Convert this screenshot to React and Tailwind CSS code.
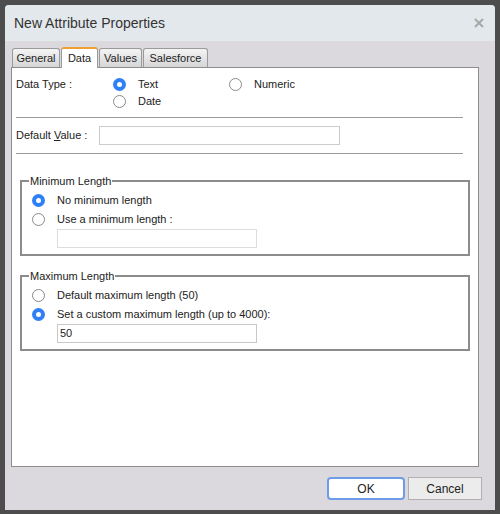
import React from "react";

function Radio({ checked }) {
  return checked ? (
    <span className="flex h-[13px] w-[13px] shrink-0 items-center justify-center rounded-full bg-[#2f7ff6]">
      <span className="h-[5px] w-[5px] rounded-full bg-white" />
    </span>
  ) : (
    <span className="h-[13px] w-[13px] shrink-0 rounded-full border border-[#8a8a8a] bg-white" />
  );
}

function RadioRow({ checked, label, h = "h-[19px]" }) {
  return (
    <div className={"flex items-center " + h}>
      <Radio checked={checked} />
      <span className="ml-[12px]">{label}</span>
    </div>
  );
}

function Tab({ label, active, w }) {
  return active ? (
    <div
      className={"relative z-10 -mb-px flex h-[21px] items-center justify-center rounded-t-[3px] border-x border-t-2 border-x-[#999] border-t-[#f0a030] bg-white " + w}
    >
      {label}
    </div>
  ) : (
    <div
      className={"mt-[2px] flex h-[19px] items-center justify-center rounded-t-[3px] border border-b-0 border-[#9a9a9a] bg-gradient-to-b from-[#f4f4f4] to-[#d6d6d8] " + w}
    >
      {label}
    </div>
  );
}

function Group({ title, children }) {
  return (
    <div className="relative mx-[8px] border-2 border-[#8c8c8c] px-[10px] pb-[6px] pt-[9px]">
      <span className="absolute -top-[9px] left-[7px] bg-white px-[1px] leading-[16px]">{title}</span>
      {children}
    </div>
  );
}

export default function App() {
  return (
    <div
      className="h-[514px] w-[500px] bg-[#4d4d4d] p-[5px] pb-[4px] text-[11px] text-[#222]"
      style={{ fontFamily: '"Liberation Sans", Arial, sans-serif' }}
    >
      <div className="flex h-[505px] w-[490px] flex-col rounded-t-[4px] bg-[#dbd9de]">
        <div className="flex h-[36px] items-center justify-between rounded-t-[4px] bg-[#e3e8ec] pl-[9px] pr-[11px]">
          <span className="text-[14px] text-[#333]">New Attribute Properties</span>
          <svg width="10" height="10" viewBox="0 0 10 10">
            <path d="M1 1L9 9M9 1L1 9" stroke="#a8a8a8" strokeWidth="2" />
          </svg>
        </div>
        <div className="flex flex-1 flex-col pl-[6px] pr-[8px] pt-[5px]">
          <div className="flex items-end gap-[1px] pl-[1px]">
            <Tab label="General" w="w-[48px]" />
            <Tab label="Data" active w="w-[37px]" />
            <Tab label="Values" w="w-[43px]" />
            <Tab label="Salesforce" w="w-[65px]" />
          </div>
          <div className="relative h-[400px] w-[468px] border border-[#8d8d8d] bg-white">
            <div className="px-[4px] pt-[8px]">
              <div className="flex">
                <div className="flex h-[17px] w-[97px] items-center">Data Type :</div>
                <div className="w-[116px]">
                  <RadioRow checked label="Text" h="h-[17px]" />
                  <RadioRow label="Date" h="h-[17px]" />
                </div>
                <div>
                  <RadioRow label="Numeric" h="h-[17px]" />
                </div>
              </div>
              <div className="mt-[7px] h-px w-[447px] bg-[#9a9a9a]" />
              <div className="mt-[8px] flex items-center">
                <span className="w-[83px]">
                  Default <span className="underline">V</span>alue :
                </span>
                <div className="h-[19px] w-[241px] border border-[#cccccc] bg-white" />
              </div>
              <div className="mt-[8px] h-px w-[447px] bg-[#9a9a9a]" />
            </div>
            <div className="mt-[26px] flex flex-col gap-[19px]">
              <Group title="Minimum Length">
                <RadioRow checked label="No minimum length" />
                <RadioRow label="Use a minimum length :" />
                <div className="ml-[25px] h-[19px] w-[200px] border border-[#dddddd] bg-white" />
              </Group>
              <Group title="Maximum Length">
                <RadioRow label="Default maximum length (50)" />
                <RadioRow checked label="Set a custom maximum length (up to 4000):" />
                <div className="ml-[25px] flex h-[19px] w-[200px] items-center border border-[#c8c8c8] bg-white pl-[2px]">
                  50
                </div>
              </Group>
            </div>
          </div>
          <div className="mt-[10px] flex justify-end gap-[3px] pr-[5px]">
            <button className="h-[23px] w-[78px] rounded-[4px] border-2 border-[#6e9ce8] bg-white text-[12px] text-[#222]">
              OK
            </button>
            <button className="h-[23px] w-[74px] border border-[#b0b0b0] bg-[#ececec] text-[12px] text-[#222]">
              Cancel
            </button>
          </div>
        </div>
      </div>
    </div>
  );
}
